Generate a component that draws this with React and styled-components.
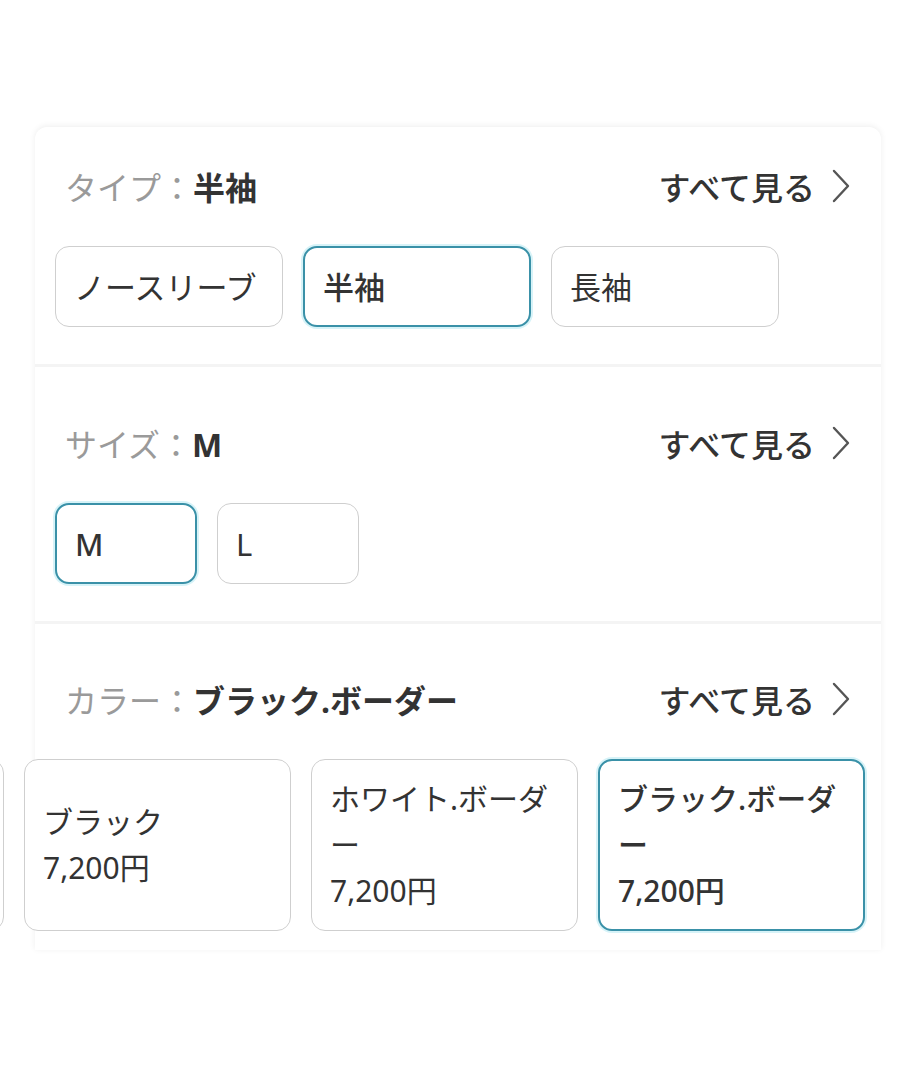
import styled, { createGlobalStyle } from "styled-components";

const GlobalStyle = createGlobalStyle`
  body {
    margin: 0;
    background: #fff;
    overflow-x: hidden;
    font-family: "Noto Sans", "Noto Sans CJK JP", sans-serif;
    color: #333;
  }
`;

const Page = styled.div`
  padding: 127px 36px 132px 35px;
`;

const Card = styled.div`
  background: #fff;
  border-radius: 12px 12px 0 0;
  box-shadow: 0 -1px 6px rgba(0, 0, 0, 0.07);
`;

const Section = styled.div`
  padding: ${(props) => props.top}px 20px ${(props) => props.bottom}px;
  border-top: ${(props) => (props.first ? "none" : "3px solid #f4f4f4")};
`;

const Header = styled.div`
  display: flex;
  align-items: center;
  justify-content: space-between;
  height: 40px;
  padding: 0 10px;
  margin-bottom: 40px;
  font-size: 32px;
`;

const Label = styled.div`
  color: #9a9a9a;
  white-space: nowrap;

  b {
    color: #333;
    font-weight: 700;
  }
`;

const SeeAll = styled.div`
  display: flex;
  align-items: center;
  gap: 16px;
  color: #333;
  font-weight: 500;

  svg {
    width: 20px;
    height: 34px;
  }
`;

const Options = styled.div`
  display: flex;
  gap: 20px;
  margin-left: ${(props) => props.shift || 0}px;
`;

const Chip = styled.div`
  box-sizing: border-box;
  flex: none;
  display: flex;
  align-items: center;
  width: ${(props) => props.w}px;
  height: ${(props) => props.h || 81}px;
  padding: 0 18px;
  background: #fff;
  border-radius: 14px;
  border: ${(props) =>
    props.selected ? "2px solid #3a91a8" : "1px solid #cfcfcf"};
  box-shadow: ${(props) =>
    props.selected ? "0 0 0 2px rgba(140, 220, 235, 0.35)" : "none"};
  font-size: ${(props) => (props.small ? 30 : 31)}px;
  font-weight: ${(props) => (props.selected ? 500 : 400)};
  color: #333;
  line-height: 46px;
  line-break: anywhere;
  word-break: break-all;
`;

const Chevron = () => (
  <svg viewBox="0 0 20 34" fill="none">
    <polyline
      points="3,2 17,17 3,32"
      stroke="#555"
      strokeWidth="2.4"
      strokeLinecap="round"
      strokeLinejoin="round"
    />
  </svg>
);

const SectionHeader = ({ label, value }) => (
  <Header>
    <Label>
      {label}：<b>{value}</b>
    </Label>
    <SeeAll>
      すべて見る
      <Chevron />
    </SeeAll>
  </Header>
);

const colors = [
  { name: "ホワイト", selected: false },
  { name: "ブラック", selected: false },
  { name: "ホワイト.ボーダー", selected: false },
  { name: "ブラック.ボーダー", selected: true },
];

export default function App() {
  return (
    <Page>
      <GlobalStyle />
      <Card>
        <Section first top={39} bottom={37}>
          <SectionHeader label="タイプ" value="半袖" />
          <Options>
            <Chip w={228}>ノースリーブ</Chip>
            <Chip w={228} selected>
              半袖
            </Chip>
            <Chip w={228}>長袖</Chip>
          </Options>
        </Section>
        <Section top={56} bottom={37}>
          <SectionHeader label="サイズ" value="M" />
          <Options>
            <Chip w={142} selected>
              M
            </Chip>
            <Chip w={142}>L</Chip>
          </Options>
        </Section>
        <Section top={55} bottom={19}>
          <SectionHeader label="カラー" value="ブラック.ボーダー" />
          <Options shift={-318}>
            {colors.map((c) => (
              <Chip key={c.name} w={267} h={172} small selected={c.selected}>
                <div>
                  {c.name}
                  <br />
                  7,200円
                </div>
              </Chip>
            ))}
          </Options>
        </Section>
      </Card>
    </Page>
  );
}
